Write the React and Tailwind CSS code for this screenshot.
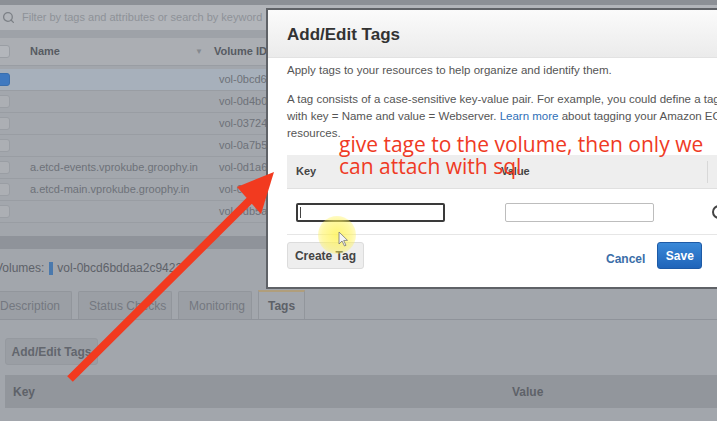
import React from 'react';
import { Search } from 'lucide-react';

const rows = [
  { name: '', id: 'vol-0bcd6', selected: true },
  { name: '', id: 'vol-0d4b0' },
  { name: '', id: 'vol-03724' },
  { name: '', id: 'vol-0a7b5' },
  { name: 'a.etcd-events.vprokube.groophy.in', id: 'vol-0d1a6' },
  { name: 'a.etcd-main.vprokube.groophy.in', id: 'vol-0d31c' },
  { name: '', id: 'vol-0db5a' },
];

const tabs = [
  { label: 'Description', w: 'w-[77px]', pl: 'pl-[4px]' },
  { label: 'Status Checks', w: 'w-[94px]', pl: 'pl-[10px]' },
  { label: 'Monitoring', w: 'w-[74px]', pl: 'pl-[10px]' },
];

const VolumeList = () => (
  <div className="text-[11px] text-[#6e7279]">
    <div className="h-[5px] bg-[#8c9096]" />
    <div className="h-[25px] bg-[#b2b5ba] flex items-center pl-[2px] gap-[7px]">
      <Search size={13} strokeWidth={2.4} className="text-[#7c8086]" />
      <span className="text-[11px] text-[#8e9298]">Filter by tags and attributes or search by keyword</span>
    </div>
    <div className="h-[8px] bg-[#9ea2a8]" />
    <div className="h-[28px] bg-[#abaeb3] flex items-center border-b border-[#999da3]">
      <div className="ml-[-4px] w-[14px] h-[13px] rounded-[3px] bg-[#b3b6bb] border border-[#9a9ea4]" />
      <span className="ml-[20px] w-[165px] font-bold text-[#575b62]">Name</span>
      <span className="w-[19px] text-[8px] text-[#85898f]">▼</span>
      <span className="font-bold text-[#575b62]">Volume ID</span>
    </div>
    <div className="h-[3px]" />
    {rows.map(r => (
      <div key={r.id} className={`h-[22px] flex items-center border-b border-[#999da3] ${r.selected ? 'bg-[#a7b0bb]' : 'bg-[#a3a7ad]'}`}>
        <div className={`ml-[-4px] w-[14px] h-[13px] rounded-[3px] border ${r.selected ? 'bg-[#3f79c0] border-[#3a6fae]' : 'bg-[#acafb4] border-[#9a9ea4]'}`} />
        <span className="ml-[20px] w-[189px] whitespace-nowrap">{r.name}</span>
        <span>{r.id}</span>
      </div>
    ))}
    <div className="h-[13px]" />
    <div className="h-[13px] bg-[#8f939a]" />
    <div className="h-[36px] flex items-center pt-[2px] text-[12px] whitespace-nowrap">
      <span className="ml-[-5px] text-[#5e6269]">Volumes:</span>
      <span className="ml-[5px] w-[4px] h-[13px] bg-[#4a79ad]" />
      <span className="ml-[4px] text-[#5e6269]">vol-0bcd6bddaa2c9422</span>
    </div>
    <div className="h-[6px]" />
    <div className="h-[29px] flex items-end border-b border-[#8f939a] text-[12px]">
      {tabs.map((t, i) => (
        <div key={t.label} className={`${t.w} ${t.pl} ${i === 0 ? 'ml-[-5px]' : 'ml-[6px]'} h-[28px] flex items-center bg-[#9b9fa5] border border-b-0 border-[#92969c] rounded-t-[2px] text-[#747880]`}>
          {t.label}
        </div>
      ))}
      <div className="ml-[6px] w-[47px] h-[29px] flex items-center justify-center bg-[#a3a7ad] border border-b-0 border-[#92969c] border-t-2 border-t-[#b09e7c] font-bold text-[#5d6168]">
        Tags
      </div>
    </div>
    <div className="pt-[18px] pl-[5px]">
      <div className="w-[93px] h-[27px] flex items-center justify-center rounded-[3px] bg-[#9a9ea4] border border-[#95999f] text-[12px] font-bold text-[#62666d]">
        Add/Edit Tags
      </div>
      <div className="mt-[10px] h-[33px] flex items-center bg-[#92969c] text-[12px] font-bold text-[#5e6269]">
        <span className="pl-[8px] w-[507px]">Key</span>
        <span>Value</span>
      </div>
    </div>
  </div>
);

const TagsModal = () => (
  <div className="absolute left-[266px] top-[8px] w-[470px] h-[281px] bg-white border-2 border-[#5f6267] text-[11.5px] text-[#555] overflow-hidden">
    <div className="h-[48px] flex items-center pt-[2px] pl-[19px] bg-gradient-to-b from-[#fbfbfb] to-[#ebebeb] border-b border-[#e2e2e2]">
      <span className="text-[17px] font-bold text-[#333]">Add/Edit Tags</span>
    </div>
    <div className="pl-[19px]">
      <div className="mt-[4px] leading-[17px] whitespace-nowrap">Apply tags to your resources to help organize and identify them.</div>
      <div className="mt-[12px] leading-[17px] whitespace-nowrap">
        A tag consists of a case-sensitive key-value pair. For example, you could define a tag<br />
        with key = Name and value = Webserver. <span className="text-[#2f6fb7]">Learn more</span> about tagging your Amazon EC2<br />
        resources.
      </div>
      <div className="mt-[13px] h-[34px] flex items-center bg-[#eeeeee] border-b border-[#e0e0e0] text-[11px] font-bold text-[#444]">
        <span className="pl-[9px] w-[214px]">Key</span>
        <span className="w-[206px]">Value</span>
        <span className="w-px h-[22px] bg-[#d8d8d8]" />
      </div>
      <div className="h-[46px] pt-[14px] flex items-start border-b border-[#e6e6e6]">
        <div className="ml-[9px] w-[149px] h-[19px] border-2 border-[#3a3a3a] rounded-[2px] flex items-center pl-[2px]">
          <span className="w-px h-[11px] bg-[#444]" />
        </div>
        <div className="ml-[60px] w-[149px] h-[19px] border border-[#bdbdbd] rounded-[2px]" />
        <div className="ml-[58px] mt-[2px] w-[14px] h-[14px] rounded-full border-2 border-[#444]" />
      </div>
      <div className="mt-[7px] flex items-center">
        <div className="w-[77px] h-[27px] flex items-center justify-center bg-[#eeeeee] border border-[#dcdcdc] rounded-[3px] text-[12px] font-bold text-[#444]">
          Create Tag
        </div>
        <span className="ml-[242px] mt-[6px] text-[12px] font-bold text-[#3b6ea8]">Cancel</span>
        <div className="ml-[12px] w-[45px] h-[27px] flex items-center justify-center rounded-[3px] bg-gradient-to-b from-[#3a89d8] to-[#1f64b9] border border-[#1d5aa6] text-[12px] font-bold text-white">
          Save
        </div>
      </div>
    </div>
  </div>
);

const Annotation = () => (
  <>
    <div className="absolute left-[339px] top-[133px] font-['Open_Sans',sans-serif] text-[21px] leading-[22px] text-[#ef3a24] whitespace-nowrap">
      give tage to the volume, then only we<br />
      can attach with sql
    </div>
    <div className="absolute left-[318px] top-[216px] w-[38px] h-[38px] rounded-full bg-[radial-gradient(circle,rgba(255,243,90,0.85)_0%,rgba(255,243,90,0.55)_55%,rgba(255,243,90,0)_100%)]" />
    <svg className="absolute left-0 top-0 pointer-events-none" width="717" height="421" viewBox="0 0 717 421">
      <path d="M339 232 L339 244 L342 241 L344.5 246 L346 245.3 L343.7 240.5 L347.5 240.3 Z" fill="#f4f4f4" stroke="#777" strokeWidth="0.8" />
      <line x1="70" y1="379" x2="252" y2="198" stroke="#f23a1f" strokeWidth="8" />
      <polygon points="274,172 237,187 261,214" fill="#f23a1f" />
    </svg>
  </>
);

export default function App() {
  return (
    <div className="relative w-[717px] h-[421px] overflow-hidden bg-[#a2a6ac] font-['Liberation_Sans',Arial,sans-serif]">
      <VolumeList />
      <TagsModal />
      <Annotation />
    </div>
  );
}
